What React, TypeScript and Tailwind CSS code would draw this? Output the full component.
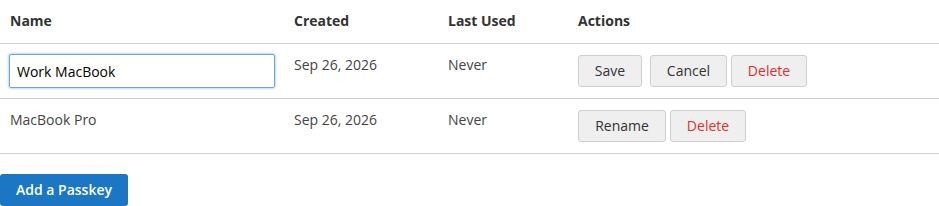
import { useState } from 'react';

interface Passkey {
  id: number;
  name: string;
  created: string;
  lastUsed: string;
}

const btn =
  'h-8 rounded-[3px] border border-[#cfcfcf] bg-[#efefef] px-0 text-sm font-medium leading-none text-[#333]';

export default function App() {
  const [keys] = useState<Passkey[]>([
    { id: 1, name: 'Work MacBook', created: 'Sep 26, 2026', lastUsed: 'Never' },
    { id: 2, name: 'MacBook Pro', created: 'Sep 26, 2026', lastUsed: 'Never' },
  ]);
  const [editing, setEditing] = useState<number | null>(1);
  const [draft, setDraft] = useState('Work MacBook');

  return (
    <div className="w-[939px] bg-white text-sm text-[#444]" style={{ fontFamily: '"Open Sans", sans-serif' }}>
      <table className="w-full table-fixed border-collapse text-left">
        <thead>
          <tr className="border-b border-[#d0d0d0]">
            <th className="w-[284px] px-[10px] pb-[12px] pt-[10px] font-bold leading-[21px] text-[#333]">Name</th>
            <th className="w-[154px] px-[10px] pb-[12px] pt-[10px] font-bold leading-[21px] text-[#333]">Created</th>
            <th className="w-[130px] px-[10px] pb-[12px] pt-[10px] font-bold leading-[21px] text-[#333]">Last Used</th>
            <th className="px-[10px] pb-[12px] pt-[10px] font-bold leading-[21px] text-[#333]">Actions</th>
          </tr>
        </thead>
        <tbody>
          {keys.map(k => (
            <tr key={k.id} className="h-[55px] border-b border-[#d0d0d0] align-top">
              <td className="px-[10px] py-[10px] leading-[21px]">
                {editing === k.id ? (
                  <input
                    value={draft}
                    onChange={e => setDraft(e.target.value)}
                    className="-ml-px block h-[34px] w-[266px] rounded-[2px] border border-[#6fa3d2] px-[7px] text-sm text-black shadow-[0_0_3px_#7fb0de] outline-none"
                  />
                ) : (
                  k.name
                )}
              </td>
              <td className="px-[10px] py-[10px] leading-[21px]">{k.created}</td>
              <td className="px-[10px] py-[10px] leading-[21px]">{k.lastUsed}</td>
              <td className="px-[10px] py-[11px]">
                <div className="flex gap-1">
                  {editing === k.id ? (
                    <>
                      <button className={`${btn} mr-1 w-[64px] bg-[#e2e2e2]`} onClick={() => setEditing(null)}>Save</button>
                      <button className={`${btn} w-[77px]`} onClick={() => setEditing(null)}>Cancel</button>
                    </>
                  ) : (
                    <button className={`${btn} w-[88px]`} onClick={() => setEditing(k.id)}>Rename</button>
                  )}
                  <button className={`${btn} w-[76px] text-[#e0302b]`}>Delete</button>
                </div>
              </td>
            </tr>
          ))}
        </tbody>
      </table>
      <button className="mt-5 h-8 w-[128px] rounded-[3px] bg-[#1b76c4] text-sm font-semibold text-white">
        Add a Passkey
      </button>
    </div>
  );
}
